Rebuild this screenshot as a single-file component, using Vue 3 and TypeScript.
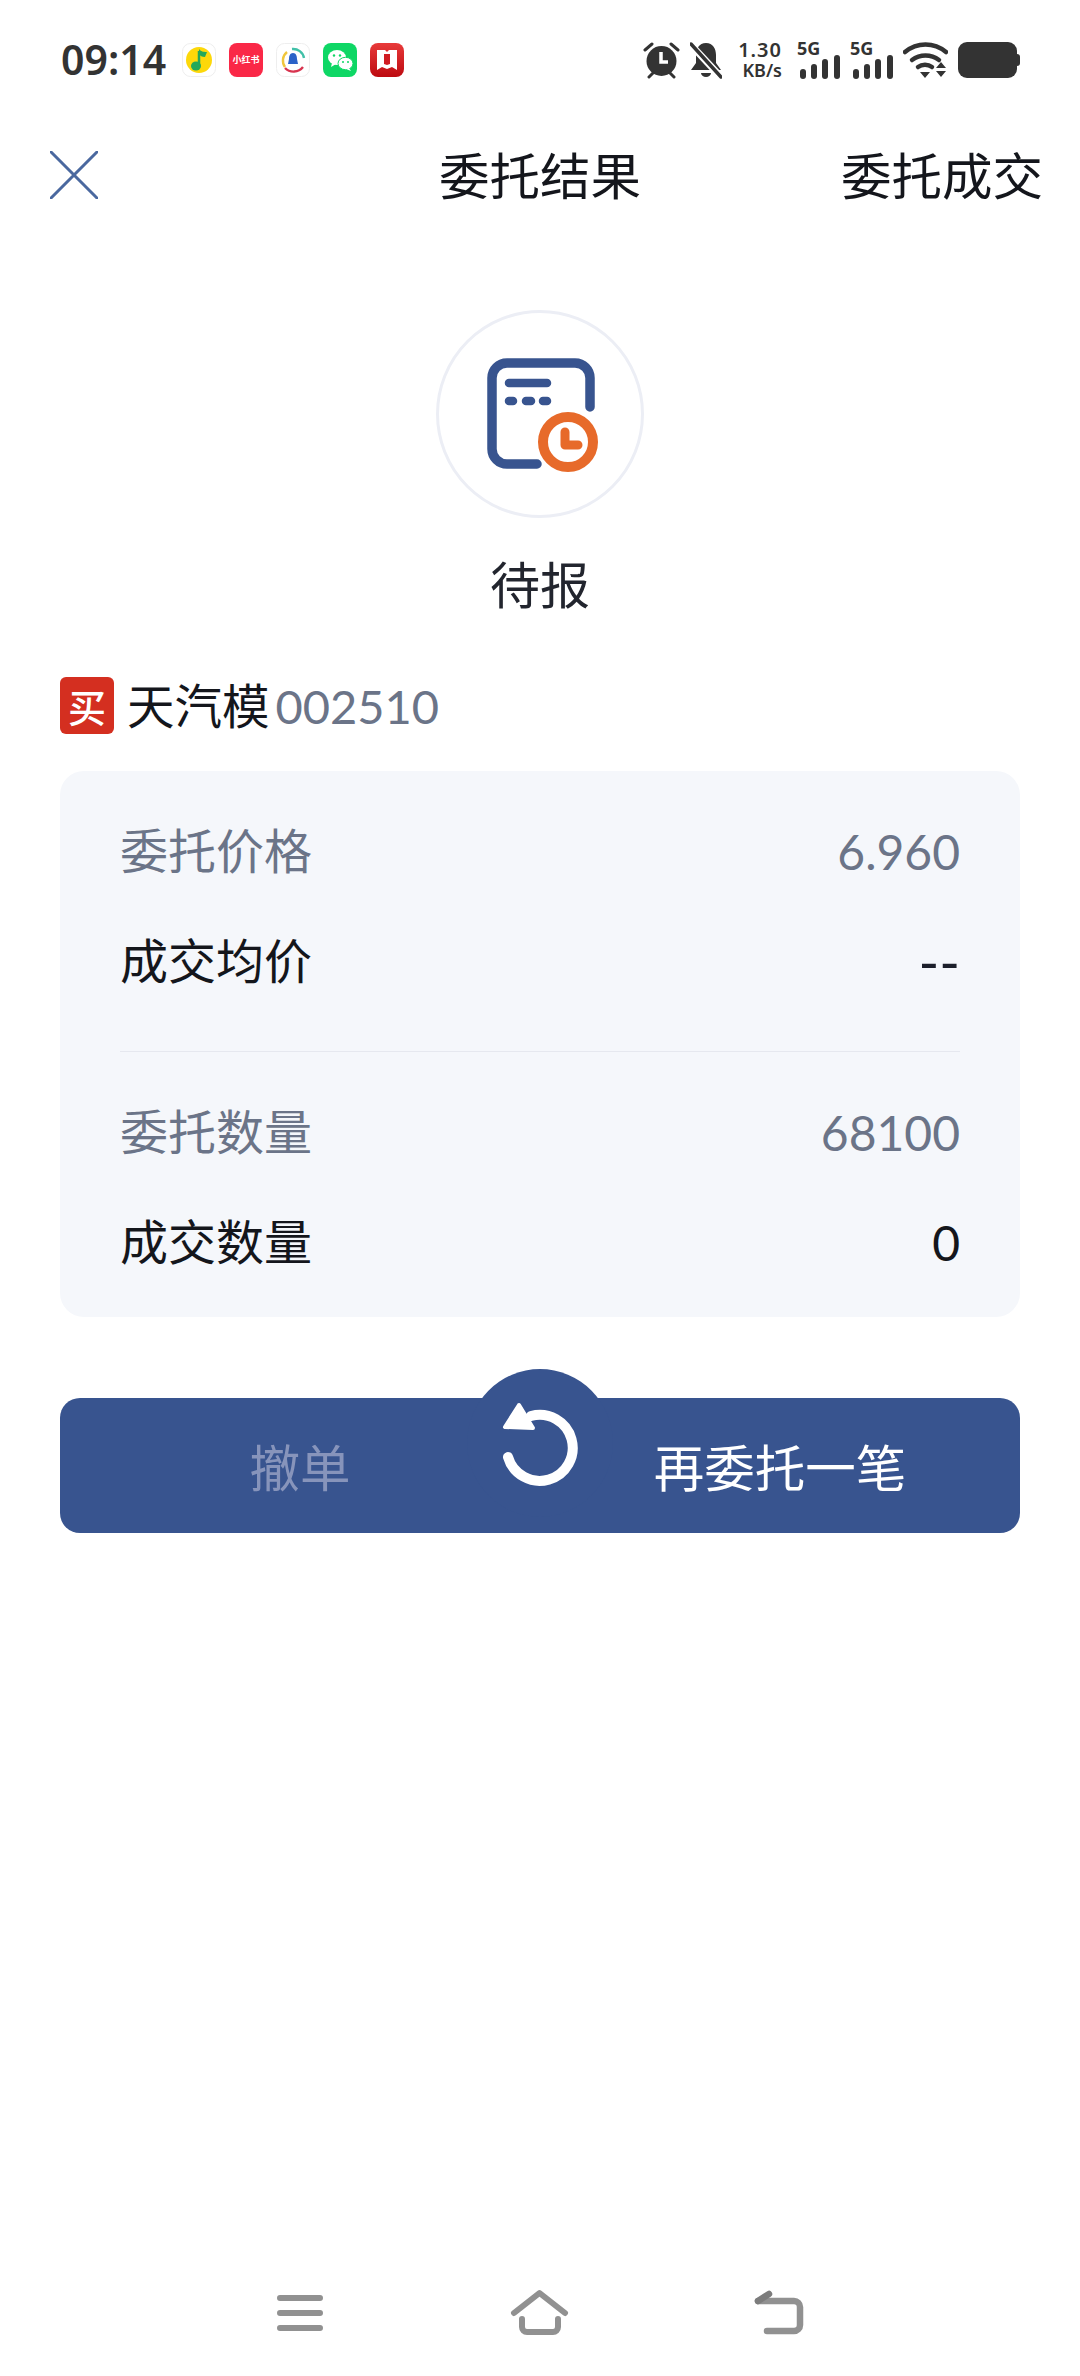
<script setup lang="ts">
const priceRows = [
  { label: "委托价格", value: "6.960", muted: true },
  { label: "成交均价", value: "--", muted: false },
];
const amountRows = [
  { label: "委托数量", value: "68100", muted: true },
  { label: "成交数量", value: "0", muted: false },
];
</script>

<template>
  <div class="page">
    <div class="status">
      <span class="time">09:14</span>
      <div class="apps">
        <svg class="app" viewBox="0 0 34 34">
          <rect x=".5" y=".5" width="33" height="33" rx="8" fill="#fff" stroke="#eee" />
          <circle cx="17" cy="17" r="13" fill="#fdd80a" />
          <path d="M17 8v15" stroke="#22a85a" stroke-width="2.5" />
          <path d="M17 6c2 3 6 3 8 3l-2 5c-3 0-5-1-6-3z" fill="#22a85a" />
          <ellipse cx="14" cy="23" rx="5" ry="4.5" fill="#22a85a" />
        </svg>
        <div class="app xhs">小红书</div>
        <svg class="app" viewBox="0 0 34 34">
          <rect x=".5" y=".5" width="33" height="33" rx="8" fill="#fff" stroke="#eee" />
          <path d="M9 24a11 11 0 0 1 2-15" fill="none" stroke="#f0c63c" stroke-width="2.4" />
          <path d="M16 6a11 11 0 0 1 12 9" fill="none" stroke="#41c0a8" stroke-width="2.4" />
          <path d="M9 25a12 12 0 0 0 18-1" fill="none" stroke="#d8344f" stroke-width="2.4" />
          <path d="M17 10c3 0 4 3 4 6l1 5h-10l1-5c0-3 1-6 4-6z" fill="#2b62c8" />
        </svg>
        <svg class="app" viewBox="0 0 34 34">
          <rect width="34" height="34" rx="8" fill="#0ed765" />
          <ellipse cx="14" cy="14.5" rx="9" ry="7.5" fill="#fff" />
          <path d="M9 20l-1 4 5-3z" fill="#fff" />
          <ellipse cx="22.5" cy="20.5" rx="7.5" ry="6.2" fill="#fff" stroke="#0ed765" stroke-width="1" />
          <path d="M26 25l2 3-5-2z" fill="#fff" />
          <circle cx="11" cy="12.5" r="1.2" fill="#0ed765" />
          <circle cx="17" cy="12.5" r="1.2" fill="#0ed765" />
          <circle cx="20" cy="19" r="1" fill="#0ed765" />
          <circle cx="25" cy="19" r="1" fill="#0ed765" />
        </svg>
        <svg class="app" viewBox="0 0 34 34">
          <defs>
            <linearGradient id="redApp" x1="0" y1="0" x2="0" y2="1">
              <stop offset="0" stop-color="#e83a3a" />
              <stop offset="1" stop-color="#bd0a10" />
            </linearGradient>
          </defs>
          <rect width="34" height="34" rx="8" fill="url(#redApp)" />
          <path d="M7 7h8l2 2 2-2h8v20l-5-3-5 2-5-2-5 3z" fill="#fff" />
          <path d="M14 11h6v10l-3 1-3-1z" fill="#d01c22" />
        </svg>
      </div>
      <div class="sys">
        <svg width="37" height="38" viewBox="0 0 37 38">
          <circle cx="18.500" cy="20" r="15" fill="#333" />
          <path d="M18 11v10h7" fill="none" stroke="#fff" stroke-width="3.500" />
          <path d="M2 9l7-6M35 9l-7-6M6 36l4-4M31 36l-4-4" stroke="#333" stroke-width="3" stroke-linecap="round" />
        </svg>
        <svg width="32" height="38" viewBox="0 0 32 38">
          <path d="M16 2c7 0 10 6 10 12v8l5 7H1l5-7v-8C6 8 9 2 16 2z" fill="#333" />
          <path d="M11 32h10a5 4 0 0 1-10 0z" fill="#333" />
          <path d="M0 3l31 33" stroke="#fff" stroke-width="7" />
          <path d="M1 3l30 33" stroke="#333" stroke-width="3.500" stroke-linecap="round" />
        </svg>
        <div class="speed">
          <span class="speed-num">1.30</span>
          <span class="speed-unit">KB/s</span>
        </div>
        <div v-for="n in 2" :key="n" class="signal">
          <span class="net">5G</span>
          <svg width="43" height="24" viewBox="0 0 43 24">
            <rect x="3" y="14" width="6" height="10" rx="3" fill="#333" />
            <rect x="14" y="9" width="6" height="15" rx="3" fill="#333" />
            <rect x="25" y="4" width="6" height="20" rx="3" fill="#333" />
            <rect x="37" y="0" width="6" height="24" rx="3" fill="#333" />
          </svg>
        </div>
        <svg width="45" height="38" viewBox="0 0 45 38">
          <path d="M2 11c12-10 29-10 41 0" fill="none" stroke="#333" stroke-width="4.500" stroke-linecap="round" />
          <path d="M9 19c8-6 19-6 27 0" fill="none" stroke="#333" stroke-width="4.500" stroke-linecap="round" />
          <path d="M15 26c4-3 10-3 14 0" fill="none" stroke="#333" stroke-width="4.500" stroke-linecap="round" />
          <path d="M17 31h10l-5 6zM33 27l5-6 5 6zM33 30h10l-5 6z" fill="#333" />
        </svg>
        <svg width="62" height="38" viewBox="0 0 62 38">
          <rect x="0" y="1" width="59" height="36" rx="9" fill="#333" />
          <path d="M59 13c2 0 3 1 3 3v6c0 2-1 3-3 3z" fill="#333" />
        </svg>
      </div>
    </div>

    <header class="nav">
      <svg class="close" width="48" height="48" viewBox="0 0 48 48">
        <path d="M1 1l46 46M47 1L1 47" stroke="#4a689f" stroke-width="3" stroke-linecap="round" />
      </svg>
      <h1 class="title">委托结果</h1>
      <span class="link">委托成交</span>
    </header>

    <section class="hero">
      <div class="badge">
        <svg width="208" height="208" viewBox="0 0 208 208">
          <path d="M154 97V68a15 15 0 0 0-15-15H71a15 15 0 0 0-15 15v71a15 15 0 0 0 15 15h30" fill="none" stroke="#38548f" stroke-width="9.500" stroke-linecap="round" />
          <path d="M73 73h38M73 91h4M90 91h5M107 91h4" stroke="#38548f" stroke-width="8.500" stroke-linecap="round" />
          <circle cx="132" cy="132" r="25" fill="#fff" stroke="#e76a2a" stroke-width="10" />
          <path d="M129 122v13h13" fill="none" stroke="#e76a2a" stroke-width="9" stroke-linecap="round" stroke-linejoin="round" />
        </svg>
      </div>
      <p class="state">待报</p>
    </section>

    <div class="stock">
      <span class="side">买</span>
      <span class="name">天汽模</span>
      <span class="code">002510</span>
    </div>

    <section class="card">
      <div v-for="row in priceRows" :key="row.label" class="row" :class="{ muted: row.muted }">
        <span class="label">{{ row.label }}</span>
        <span class="value" :class="{ dash: row.value === '--' }">{{ row.value }}</span>
      </div>
      <div class="divider"></div>
      <div v-for="row in amountRows" :key="row.label" class="row" :class="{ muted: row.muted }">
        <span class="label">{{ row.label }}</span>
        <span class="value">{{ row.value }}</span>
      </div>
    </section>

    <div class="actions">
      <button class="action off">撤单</button>
      <button class="action">再委托一笔</button>
      <div class="refresh">
        <svg width="146" height="148" viewBox="0 0 146 148">
          <path d="M41 88a33 33 0 1 0 23-41" fill="none" stroke="#fff" stroke-width="10" stroke-linecap="round" />
          <path d="M52 36L38 58l28 1z" fill="#fff" stroke="#fff" stroke-width="4" stroke-linejoin="round" />
        </svg>
      </div>
    </div>

    <footer class="softkeys">
      <svg width="51" height="52" viewBox="0 0 51 52">
        <path d="M3 10h40M3 25h40M3 40h40" stroke="#919191" stroke-width="6" stroke-linecap="round" />
      </svg>
      <svg width="60" height="52" viewBox="0 0 60 52">
        <path d="M4 25L29.500 5 55 25" fill="none" stroke="#919191" stroke-width="6" stroke-linecap="round" stroke-linejoin="round" />
        <path d="M12 31v8a5 5 0 0 0 5 5h26a5 5 0 0 0 5-5v-8" fill="none" stroke="#919191" stroke-width="6" stroke-linecap="round" />
      </svg>
      <svg width="56" height="52" viewBox="0 0 56 52">
        <path d="M6 13h36a6 6 0 0 1 6 6v18a6 6 0 0 1-6 6H15" fill="none" stroke="#919191" stroke-width="6.500" stroke-linecap="round" />
        <path d="M6 13l11-7" stroke="#7c7c7c" stroke-width="6.500" stroke-linecap="round" />
      </svg>
    </footer>
  </div>
</template>

<style scoped>
.page {
  position: relative;
  display: flex;
  flex-direction: column;
  width: 1080px;
  height: 2376px;
  background: #fff;
  color: #14161c;
  font-family: "Noto Sans", "Noto Sans CJK SC", sans-serif;
  overflow: hidden;
}
.status {
  display: flex;
  align-items: center;
  height: 118px;
  padding: 0 60px 0 61px;
  box-sizing: border-box;
}
.time {
  width: 104px;
  font-size: 41px;
  font-weight: 600;
  color: #333;
  white-space: nowrap;
}
.apps {
  display: flex;
  gap: 13px;
  margin: 1px 0 0 17px;
}
.app {
  display: block;
  width: 34px;
  height: 34px;
}
.xhs {
  display: flex;
  align-items: center;
  justify-content: center;
  border-radius: 8px;
  background: #fa2847;
  color: #fff;
  font-size: 9px;
  font-weight: 700;
  white-space: nowrap;
}
.sys {
  display: flex;
  align-items: center;
  gap: 10px;
  margin: 2px 0 0 auto;
}
.speed {
  display: flex;
  flex-direction: column;
  align-items: flex-end;
  width: 50px;
  padding-right: 5px;
  color: #333;
  font-weight: 600;
  line-height: 20px;
}
.speed-num {
  font-size: 20px;
  letter-spacing: 1px;
}
.speed-unit {
  font-size: 18px;
}
.signal {
  display: flex;
  flex-direction: column;
  width: 43px;
  height: 38px;
}
.signal svg {
  display: block;
}
.net {
  height: 14px;
  font-size: 18px;
  font-weight: 700;
  line-height: 14px;
  color: #333;
}
.nav {
  position: relative;
  display: flex;
  align-items: center;
  justify-content: space-between;
  height: 114px;
  padding: 0 37px 0 50px;
}
.title {
  position: absolute;
  left: 0;
  right: 0;
  margin: 0;
  padding-bottom: 5px;
  text-align: center;
  font-size: 50.5px;
  font-weight: 400;
}
.link {
  padding-bottom: 5px;
  font-size: 50.5px;
}
.close {
  display: block;
}
.hero {
  display: flex;
  flex-direction: column;
  align-items: center;
  margin-top: 78px;
}
.badge {
  width: 208px;
  height: 208px;
  border: 3px solid #eceef5;
  border-radius: 50%;
  box-sizing: border-box;
}
.badge svg {
  display: block;
  margin: -3px;
}
.state {
  margin: 32px 0 0;
  font-size: 50px;
  line-height: 70px;
  color: #22252e;
}
.stock {
  display: flex;
  align-items: center;
  height: 57px;
  margin: 57px 60px 0;
  font-size: 47.5px;
}
.side {
  display: flex;
  align-items: center;
  justify-content: center;
  width: 54px;
  height: 57px;
  margin-right: 13px;
  border-radius: 6px;
  background: #d42f20;
  color: #fff;
  font-size: 38px;
  font-weight: 500;
}
.name {
  padding-bottom: 5px;
}
.code {
  margin-left: 6px;
  color: #6b7488;
  font-family: Lato, "Noto Sans", sans-serif;
  font-size: 47px;
}
.card {
  margin: 37px 60px 0;
  padding: 26px 60px 19px;
  border-radius: 24px;
  background: #f5f7fb;
}
.row {
  display: flex;
  align-items: center;
  justify-content: space-between;
  height: 110px;
  font-size: 48px;
}
.row.muted {
  color: #6b7488;
}
.label {
  padding-bottom: 8px;
}
.value {
  font-family: Lato, "Noto Sans", sans-serif;
  padding-bottom: 2px;
}
.value.dash {
  font-size: 56px;
  color: #1c1f2b;
}
.divider {
  height: 1px;
  margin: 34px 0 26px;
  background: #e6e8ef;
}
.actions {
  position: relative;
  display: flex;
  height: 135px;
  margin: 81px 60px 0;
  border-radius: 20px;
  background: #38548f;
}
.action {
  flex: 1;
  border: 0;
  padding: 0 0 2px;
  background: none;
  color: #fff;
  font: inherit;
  font-size: 50.5px;
}
.action.off {
  color: #8794bb;
}
.refresh {
  position: absolute;
  left: 407px;
  top: -29px;
  width: 146px;
  height: 148px;
  border-radius: 50%;
  background: #38548f;
}
.refresh svg {
  display: block;
}
.softkeys {
  display: flex;
  align-items: flex-start;
  gap: 182px;
  margin-top: auto;
  padding: 0 0 36px 277px;
}
.softkeys svg {
  display: block;
}
</style>
